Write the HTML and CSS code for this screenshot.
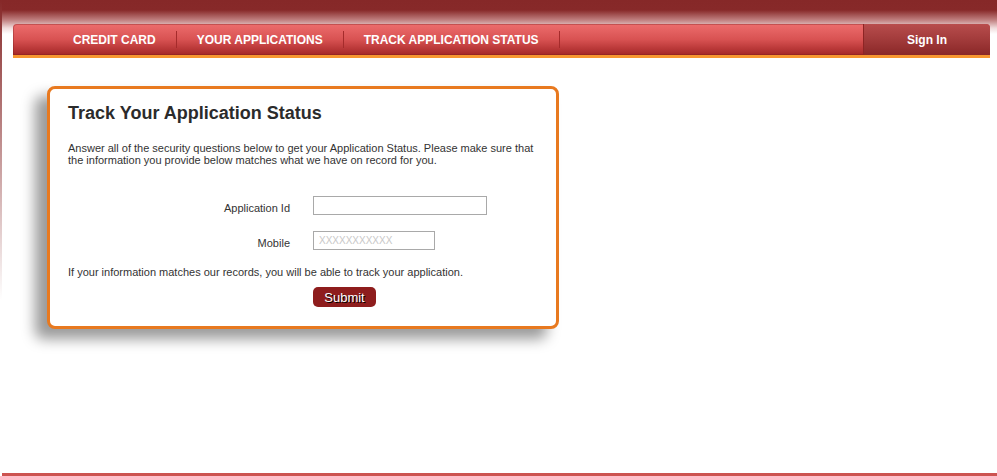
FILE: index.html
```html
<!DOCTYPE html>
<html lang="en">
<head>
    <meta charset="UTF-8">
    <meta name="viewport" content="width=device-width, initial-scale=1.0">
    <title>Track Your Application Status</title>
    <link rel="stylesheet" href="styles.css">
</head>
<body>
    <div class="header">
        <div class="nav">
            <ul class="menu">
                <li class="first"><a href="#">CREDIT CARD</a></li>
                <li><a href="#">YOUR APPLICATIONS</a></li>
                <li><a href="#">TRACK APPLICATION STATUS</a></li>
            </ul>
            <a class="sign-in" href="#">Sign In</a>
        </div>
    </div>

    <div class="main">
        <div class="card">
            <h2>Track Your Application Status</h2>
            <p class="intro">Answer all of the security questions below to get your Application Status. Please make sure that the information you provide below matches what we have on record for you.</p>

            <form class="track-form" onsubmit="return false;">
                <label for="appId">Application Id</label>
                <input type="text" id="appId" class="field-long">

                <label for="mobile">Mobile</label>
                <input type="text" id="mobile" class="field-short" placeholder="XXXXXXXXXXX">

                <p class="note">If your information matches our records, you will be able to track your application.</p>

                <span></span>
                <button type="submit" class="submit-btn">Submit</button>
            </form>
        </div>
    </div>

    <div class="footer"></div>
</body>
</html>
```

FILE: styles.css
```css
body { font-family: "Liberation Sans", Arial, sans-serif; margin: 0; padding: 0; color: #333; background-color: #fff;
    background-image: linear-gradient(#862828, #fff 300px), linear-gradient(#862828 0, #872929 10px, #c08080 20px, #f0dcdc 28px, #fff 34px);
    background-repeat: no-repeat, repeat-x; background-size: 2px 310px, 100% 40px; }
.header { padding: 24px 7px 0 13px; }
.nav { display: flex; height: 31px; border-bottom: 3px solid #f7962f; border-radius: 4px 4px 0 0; background: linear-gradient(#ed6d6d, #d85252 50%, #a42626); box-shadow: 0 0 0 1px rgba(120, 30, 30, 0.35) inset; }
.menu { display: flex; align-items: center; list-style: none; margin: 0; padding: 0 0 0 40px; flex: 1; }
.menu li { padding: 0 20px; border-right: 1px solid #a52b2b; line-height: 16px; }
.menu a { color: #fff; font-weight: bold; font-size: 12px; text-decoration: none; }
.sign-in { width: 126px; display: flex; align-items: center; justify-content: center; color: #fff; font-weight: bold; font-size: 12px; text-decoration: none; border-left: 1px solid #8e2424; border-radius: 0 4px 0 0; background: linear-gradient(#b84d4d, #a23b3b 50%, #8a2727); }
.main { padding: 28px 0 0 47px; }
.card { box-sizing: border-box; width: 512px; padding: 13px 18px 18px; border: 3px solid #e8791f; border-radius: 8px; background: #fff; box-shadow: -12px 10px 14px rgba(0, 0, 0, 0.4); }
h2 { margin: 0; font-size: 18px; line-height: 22px; color: #2b2b2b; }
.intro { margin: 18px 0 0; font-size: 11px; line-height: 12px; color: #333; }
.track-form { display: grid; grid-template-columns: 222px auto; column-gap: 23px; row-gap: 16px; align-items: center; margin-top: 30px; font-size: 11px; }
.track-form label { text-align: right; padding-top: 4px; color: #333; }
.track-form input { box-sizing: border-box; height: 19px; padding: 0 5px; border: 1px solid #a9a9a9; font-family: inherit; font-size: 10px; }
.track-form input::placeholder { color: #c8c8c8; }
.field-long { width: 174px; }
.field-short { width: 122px; }
.note { grid-column: 1 / 3; margin: 0; line-height: 12px; }
.submit-btn { width: 63px; height: 20px; margin-top: -7px; margin-bottom: 1px; padding: 0; border: none; border-radius: 5px; background: #8e1d1d; color: #fff; font-family: inherit; font-size: 13px; text-shadow: 1px 1px 0 #000; cursor: pointer; }
.footer { margin: 144px 0 0 2px; height: 4px; background: #cd5350; }
```
